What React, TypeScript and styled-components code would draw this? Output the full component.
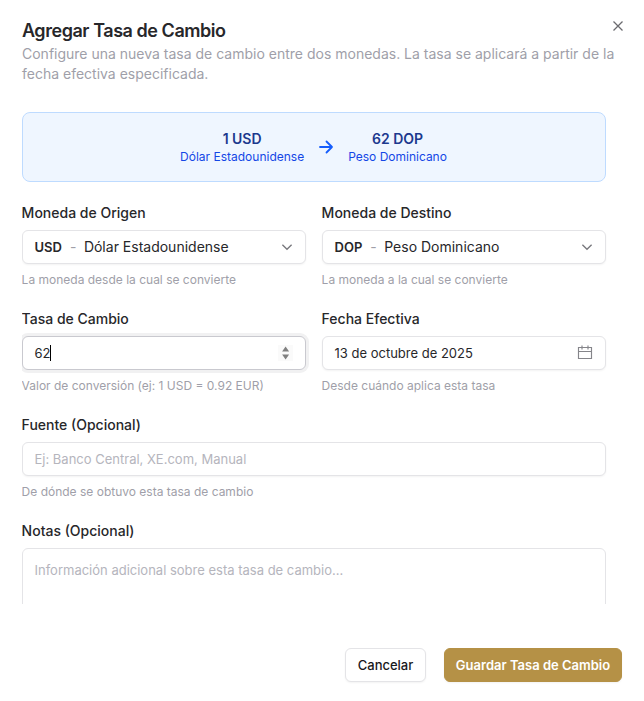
import React from 'react';
import styled, { createGlobalStyle } from 'styled-components';

const GlobalStyle = createGlobalStyle`
  *, *::before, *::after { box-sizing: border-box; }
  body {
    margin: 0;
    background: #fff;
    color: #27272a;
    font-family: Inter, "Liberation Sans", sans-serif;
    font-size: 14px;
  }
  h2, p { margin: 0; }
`;

const Dialog = styled.div`
  position: relative;
  display: flex;
  flex-direction: column;
  width: 644px;
  height: 701px;
  padding: 22px 22px 19px;
  background: #fff;
  overflow: hidden;
`;

const CloseButton = styled.button`
  position: absolute;
  top: 18px;
  right: 18px;
  width: 16px;
  height: 16px;
  padding: 0;
  border: 0;
  background: none;
  color: #6b6b6f;
  svg { display: block; }
`;

const Header = styled.header`
  display: flex;
  flex-direction: column;
  gap: 4px;
`;

const Title = styled.h2`
  font-size: 18px;
  font-weight: 600;
  line-height: 18px;
  letter-spacing: -0.45px;
  color: #27272a;
`;

const Description = styled.p`
  font-size: 14px;
  line-height: 20px;
  color: #9f9fa9;
`;

const ScrollArea = styled.div`
  margin-top: 28px;
  height: 492px;
  padding-right: 16px;
  overflow: hidden;
`;

const Preview = styled.div`
  display: flex;
  align-items: center;
  justify-content: center;
  gap: 13px;
  height: 70px;
  padding-right: 1px;
  border: 1px solid #bedbff;
  border-radius: 8px;
  background: #eff6ff;
  color: #155dfc;
`;

const Amount = styled.div`
  text-align: center;
`;

const AmountValue = styled.div`
  font-size: 14px;
  font-weight: 600;
  line-height: 20px;
  color: #1c398e;
`;

const AmountName = styled.div`
  font-size: 12px;
  line-height: 16px;
  color: #1447e6;
`;

const Form = styled.div`
  display: grid;
  grid-template-columns: 284px 284px;
  gap: 24px 16px;
  margin-top: 24px;
`;

const Field = styled.div<{ $wide?: boolean }>`
  grid-column: ${(p) => (p.$wide ? '1 / -1' : 'auto')};
  display: flex;
  flex-direction: column;
`;

const Label = styled.label`
  font-size: 14px;
  font-weight: 500;
  line-height: 14px;
  color: #27272a;
  margin: 0 0 10px -0.4px;
`;

const Help = styled.p`
  margin: 8px 0 0 -0.4px;
  font-size: 12px;
  line-height: 16px;
  color: #9f9fa9;
`;

const Control = styled.div<{ $focused?: boolean; $size?: number }>`
  display: flex;
  align-items: center;
  justify-content: space-between;
  height: 34px;
  padding: 0 12px 0 11.5px;
  border: 1px solid ${(p) => (p.$focused ? '#c9c9cf' : '#e4e4e7')};
  border-radius: 6px;
  background: #fff;
  box-shadow: ${(p) => (p.$focused ? '0 0 0 3px #f1f1f2' : '0 1px 2px rgba(0, 0, 0, 0.05)')};
  font-size: ${(p) => p.$size ?? 13}px;
  color: #27272a;
  svg { display: block; flex: none; }
`;

const CurrencyValue = styled.span`
  display: flex;
  align-items: center;
  gap: 8px;
  padding-bottom: 1px;
  line-height: 20px;
`;

const Code = styled.span`
  font-size: 13px;
  font-weight: 600;
  padding-top: 1px;
`;

const Dash = styled.span`
  color: #9f9fa9;
  margin-right: -0.5px;
`;

const Typed = styled.span`
  display: flex;
  align-items: center;
`;

const Caret = styled.span`
  width: 1px;
  height: 16px;
  margin-left: -0.5px;
  background: #000;
`;

const Spinner = styled.span`
  display: flex;
  align-items: center;
  justify-content: center;
  width: 15px;
  height: 16px;
  background: #fafafa;
`;

const TextInput = styled.input`
  width: 100%;
  height: 34px;
  padding: 0 11.5px;
  border: 1px solid #e4e4e7;
  border-radius: 6px;
  outline: 0;
  box-shadow: 0 1px 2px rgba(0, 0, 0, 0.05);
  font: 13px Inter, sans-serif;
  &::placeholder { color: #b5b5bd; opacity: 1; }
`;

const TextArea = styled.textarea`
  display: block;
  width: 100%;
  height: 80px;
  padding: 11px 11.5px;
  border: 1px solid #e4e4e7;
  border-radius: 6px;
  outline: 0;
  resize: none;
  font: 13px/20px Inter, sans-serif;
  &::placeholder { color: #b5b5bd; opacity: 1; }
`;

const Footer = styled.footer`
  display: flex;
  justify-content: flex-end;
  gap: 18px;
  margin-top: auto;
`;

const Button = styled.button<{ $primary?: boolean }>`
  height: 34px;
  width: ${(p) => (p.$primary ? 178 : 81)}px;
  padding: 0;
  border: 1px solid ${(p) => (p.$primary ? '#b59146' : '#e4e4e7')};
  border-radius: 6px;
  background: ${(p) => (p.$primary ? '#b59146' : '#fff')};
  color: ${(p) => (p.$primary ? '#fff' : '#18181b')};
  font-family: inherit;
  font-size: 13px;
  font-weight: ${(p) => (p.$primary ? 600 : 500)};
  white-space: nowrap;
  box-shadow: 0 1px 2px rgba(0, 0, 0, 0.05);
`;

const Chevron = () => (
  <svg width="12" height="16" viewBox="0 0 12 16" fill="none" stroke="#77777c" strokeWidth="1.3">
    <path d="M1.4 5.800 6 10.300l4.600-4.500" />
  </svg>
);

const Calendar = () => (
  <svg width="16" height="16" viewBox="0 0 16 16" fill="none" stroke="#85858a" strokeWidth="1.15">
    <path d="M1.500 2.500h13v11h-13zM1.500 6.500h13M5 .5v4M11 .5v4" />
  </svg>
);

const currencies = [
  { label: 'Moneda de Origen', code: 'USD', name: 'Dólar Estadounidense', help: 'La moneda desde la cual se convierte' },
  { label: 'Moneda de Destino', code: 'DOP', name: 'Peso Dominicano', help: 'La moneda a la cual se convierte' },
];

export default function App() {
  return (
    <>
      <GlobalStyle />
      <Dialog role="dialog" aria-labelledby="title">
        <CloseButton aria-label="Cerrar">
          <svg width="16" height="16" viewBox="0 0 16 16" fill="none" stroke="currentColor" strokeWidth="1.3">
            <path d="m3.500 3.500 9 9M12.500 3.500l-9 9" />
          </svg>
        </CloseButton>
        <Header>
          <Title id="title">Agregar Tasa de Cambio</Title>
          <Description>
            Configure una nueva tasa de cambio entre dos monedas. La tasa se aplicará a partir de la fecha efectiva
            especificada.
          </Description>
        </Header>
        <ScrollArea>
          <Preview>
            <Amount>
              <AmountValue>1 USD</AmountValue>
              <AmountName>Dólar Estadounidense</AmountName>
            </Amount>
            <svg width="18" height="18" viewBox="0 0 18 18" fill="none" stroke="currentColor" strokeWidth="1.8" strokeLinecap="round" strokeLinejoin="round">
              <path d="M3 9h12M9.500 3.500 15 9l-5.500 5.500" />
            </svg>
            <Amount>
              <AmountValue>62 DOP</AmountValue>
              <AmountName>Peso Dominicano</AmountName>
            </Amount>
          </Preview>
          <Form>
            {currencies.map((c) => (
              <Field key={c.code}>
                <Label>{c.label}</Label>
                <Control $size={14}>
                  <CurrencyValue>
                    <Code>{c.code}</Code>
                    <Dash>-</Dash>
                    <span>{c.name}</span>
                  </CurrencyValue>
                  <Chevron />
                </Control>
                <Help>{c.help}</Help>
              </Field>
            ))}
            <Field>
              <Label>Tasa de Cambio</Label>
              <Control $focused>
                <Typed>
                  62
                  <Caret />
                </Typed>
                <Spinner>
                  <svg width="8" height="14" viewBox="0 0 8 14" fill="#808080">
                    <path d="M3.600 .6 7.100 5.500h-7zM3.600 13.400 7.100 8.500h-7z" />
                  </svg>
                </Spinner>
              </Control>
              <Help>Valor de conversión (ej: 1 USD = 0.92 EUR)</Help>
            </Field>
            <Field>
              <Label>Fecha Efectiva</Label>
              <Control>
                <span>13 de octubre de 2025</span>
                <Calendar />
              </Control>
              <Help>Desde cuándo aplica esta tasa</Help>
            </Field>
            <Field $wide>
              <Label>Fuente (Opcional)</Label>
              <TextInput placeholder="Ej: Banco Central, XE.com, Manual" />
              <Help>De dónde se obtuvo esta tasa de cambio</Help>
            </Field>
            <Field $wide>
              <Label>Notas (Opcional)</Label>
              <TextArea placeholder="Información adicional sobre esta tasa de cambio..." />
            </Field>
          </Form>
        </ScrollArea>
        <Footer>
          <Button>Cancelar</Button>
          <Button $primary>Guardar Tasa de Cambio</Button>
        </Footer>
      </Dialog>
    </>
  );
}
